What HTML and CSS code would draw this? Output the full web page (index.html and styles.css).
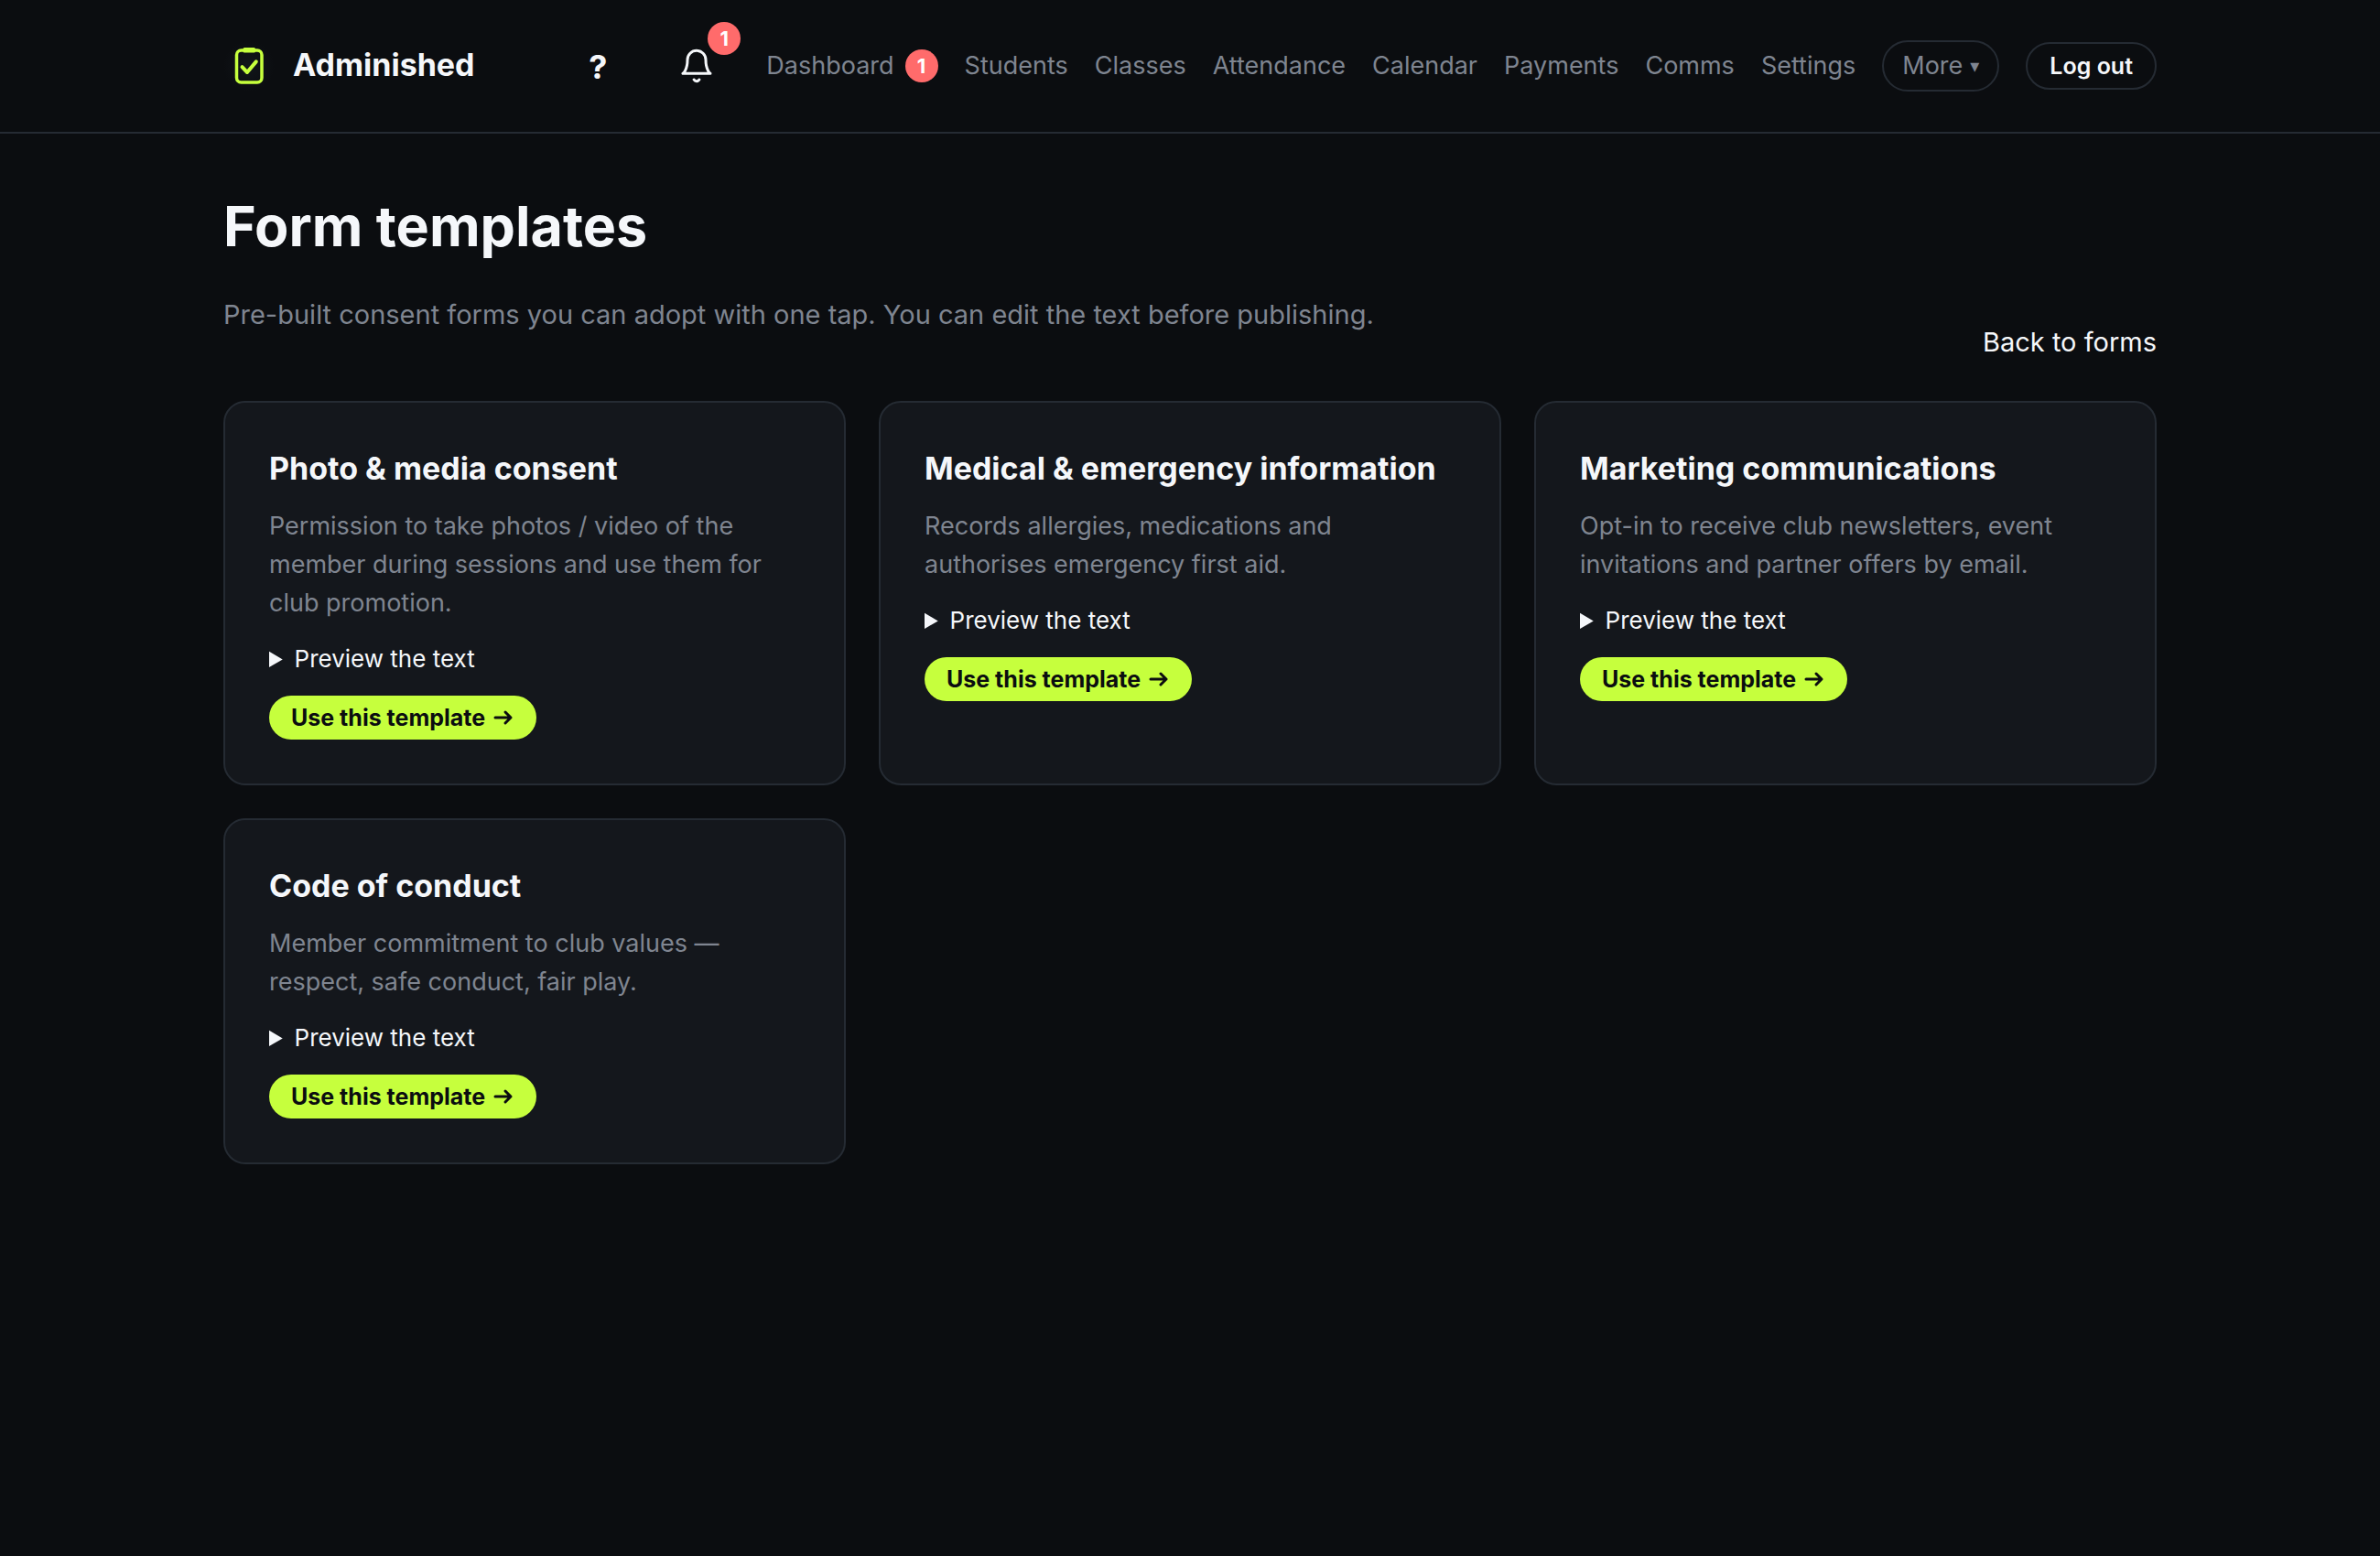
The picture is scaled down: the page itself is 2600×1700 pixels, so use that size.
FILE: index.html
```html
<!DOCTYPE html>
<html lang="en">
<head>
<meta charset="utf-8">
<meta name="viewport" content="width=device-width, initial-scale=1">
<title>Form templates – Adminished</title>
<link rel="stylesheet" href="styles.css">
</head>
<body>
<header class="topbar">
  <div class="container topbar-inner">
    <a class="brand" href="#">
      <svg class="brand-mark" viewBox="0 0 56 56" fill="none" aria-hidden="true">
        <rect x="14.5" y="11" width="27.5" height="35" rx="5" stroke="currentColor" stroke-width="3.5"/>
        <rect x="21.5" y="8" width="13.5" height="5.5" rx="1.5" fill="currentColor"/>
        <path d="M20.5 29.2 26 35l9.8-11.6" stroke="currentColor" stroke-width="4" stroke-linecap="round" stroke-linejoin="round"/>
      </svg>
      <span class="brand-name">Adminished</span>
    </a>
    <div class="tools">
      <button class="tool help" type="button" aria-label="Help">?</button>
      <button class="tool" type="button" aria-label="Notifications">
        <svg class="bell" viewBox="0 0 24 24" fill="none" stroke="currentColor" stroke-width="1.8" stroke-linecap="round" stroke-linejoin="round" aria-hidden="true">
          <path d="M18 8A6 6 0 0 0 6 8c0 7-3 9-3 9h18s-3-2-3-9"/>
          <path d="M13.73 21a2 2 0 0 1-3.46 0"/>
        </svg>
        <span class="badge tool-badge">1</span>
      </button>
    </div>
    <nav class="nav" aria-label="Main">
      <a class="nav-link" href="#">Dashboard <span class="badge">1</span></a>
      <a class="nav-link" href="#">Students</a>
      <a class="nav-link" href="#">Classes</a>
      <a class="nav-link" href="#">Attendance</a>
      <a class="nav-link" href="#">Calendar</a>
      <a class="nav-link" href="#">Payments</a>
      <a class="nav-link" href="#">Comms</a>
      <a class="nav-link" href="#">Settings</a>
      <button class="pill more" type="button">More <span class="caret">▾</span></button>
      <button class="pill logout" type="button">Log out</button>
    </nav>
  </div>
</header>
<main class="container main">
  <div class="page-head">
    <div class="page-intro">
      <h1 class="page-title">Form templates</h1>
      <p class="page-sub">Pre-built consent forms you can adopt with one tap. You can edit the text before publishing.</p>
    </div>
    <a class="back" href="#">Back to forms</a>
  </div>
  <div class="grid">
    <article class="card">
      <h2 class="card-title">Photo &amp; media consent</h2>
      <p class="card-text">Permission to take photos / video of the member during sessions and use them for club promotion.</p>
      <details class="preview"><summary>Preview the text</summary></details>
      <button class="use" type="button">Use this template <svg class="arrow" viewBox="0 0 24 24" aria-hidden="true"><path d="M3 12h17M14 6l6 6-6 6"/></svg></button>
    </article>
    <article class="card">
      <h2 class="card-title">Medical &amp; emergency information</h2>
      <p class="card-text">Records allergies, medications and authorises emergency first aid.</p>
      <details class="preview"><summary>Preview the text</summary></details>
      <button class="use" type="button">Use this template <svg class="arrow" viewBox="0 0 24 24" aria-hidden="true"><path d="M3 12h17M14 6l6 6-6 6"/></svg></button>
    </article>
    <article class="card">
      <h2 class="card-title">Marketing communications</h2>
      <p class="card-text">Opt-in to receive club newsletters, event invitations and partner offers by email.</p>
      <details class="preview"><summary>Preview the text</summary></details>
      <button class="use" type="button">Use this template <svg class="arrow" viewBox="0 0 24 24" aria-hidden="true"><path d="M3 12h17M14 6l6 6-6 6"/></svg></button>
    </article>
    <article class="card">
      <h2 class="card-title">Code of conduct</h2>
      <p class="card-text">Member commitment to club values — respect, safe conduct, fair play.</p>
      <details class="preview"><summary>Preview the text</summary></details>
      <button class="use" type="button">Use this template <svg class="arrow" viewBox="0 0 24 24" aria-hidden="true"><path d="M3 12h17M14 6l6 6-6 6"/></svg></button>
    </article>
  </div>
</main>
</body>
</html>
```
FILE: styles.css
```css
:root {
  --bg: #0b0d10;
  --surface: #14171c;
  --line: #252b33;
  --text: #f5f7fa;
  --muted: #7f8590;
  --accent: #c6ff3d;
  --alert: #ff6b6b;
}

* { box-sizing: border-box; }

body {
  margin: 0;
  min-height: 100vh;
  background: var(--bg);
  color: var(--text);
  font-family: Inter, "Liberation Sans", sans-serif;
  font-size: 27px;
  line-height: 42px;
}

h1, h2, p { margin: 0; }
a { color: inherit; text-decoration: none; }
button { font: inherit; color: inherit; cursor: pointer; }

.container {
  max-width: 2240px;
  margin: 0 auto;
  padding: 0 64px;
}

.topbar { border-bottom: 2px solid var(--line); }

.topbar-inner {
  display: flex;
  align-items: center;
  min-height: 144px;
}

.brand {
  display: flex;
  align-items: center;
  gap: 20px;
  margin-right: auto;
}

.brand-mark {
  width: 56px;
  height: 56px;
  color: var(--accent);
  background: radial-gradient(closest-side, #11151a, var(--bg));
}

.brand-name {
  padding-bottom: 2px;
  font-size: 34px;
  font-weight: 700;
}

.tools {
  display: flex;
  gap: 20px;
  margin-right: 32px;
}

.tool {
  position: relative;
  display: flex;
  align-items: center;
  justify-content: center;
  width: 88px;
  height: 88px;
  padding: 0;
  border: 0;
  background: none;
}

.help {
  padding-top: 2px;
  font-size: 36px;
  font-weight: 700;
}

.bell {
  width: 40px;
  height: 40px;
}

.badge {
  display: inline-flex;
  align-items: center;
  justify-content: center;
  min-width: 36px;
  height: 36px;
  border-radius: 18px;
  background: var(--alert);
  color: #fff;
  font-size: 22px;
  font-weight: 700;
  line-height: 36px;
}

.tool-badge {
  position: absolute;
  top: -4px;
  right: -4px;
}

.nav {
  display: flex;
  align-items: center;
  gap: 29px;
  color: var(--muted);
}

.nav-link {
  display: flex;
  align-items: center;
  gap: 12px;
}

.pill {
  border: 2px solid var(--line);
  border-radius: 28px;
  background: none;
}

.more {
  display: flex;
  align-items: center;
  gap: 8px;
  height: 56px;
  padding: 0 20px;
}

.caret {
  font-family: "DejaVu Sans", sans-serif;
  font-size: 20px;
}

.logout {
  height: 52px;
  padding: 0 24px;
  color: var(--text);
  font-size: 25px;
  font-weight: 600;
  line-height: 48px;
}

.main { padding-top: 64px; padding-bottom: 64px; }

.page-head {
  display: flex;
  align-items: flex-end;
  justify-content: space-between;
  gap: 32px;
  margin-bottom: 40px;
}

.page-title {
  margin-bottom: 36px;
  font-size: 61px;
  font-weight: 700;
  line-height: 74px;
}

.page-sub {
  margin-bottom: 30px;
  color: var(--muted);
  font-size: 29px;
  line-height: 48px;
}

.back {
  font-size: 29px;
  line-height: 48px;
}

.grid {
  display: grid;
  grid-template-columns: repeat(3, 1fr);
  gap: 36px;
}

.card {
  padding: 48px;
  border: 2px solid var(--line);
  border-radius: 24px;
  background: var(--surface);
}

.card-title {
  margin-bottom: 18px;
  font-size: 34px;
  font-weight: 700;
  line-height: 48px;
}

.card-text {
  margin-bottom: 20px;
  color: var(--muted);
}

.preview {
  margin-bottom: 20px;
  font-size: 26px;
  line-height: 40px;
}

.use {
  display: flex;
  align-items: center;
  gap: 8px;
  height: 48px;
  padding: 0 24px;
  border: 0;
  border-radius: 24px;
  background: var(--accent);
  color: var(--bg);
  font-size: 25px;
  font-weight: 700;
}

.arrow {
  width: 24px;
  height: 24px;
  fill: none;
  stroke: currentColor;
  stroke-width: 3;
  stroke-linecap: round;
  stroke-linejoin: round;
}
```
